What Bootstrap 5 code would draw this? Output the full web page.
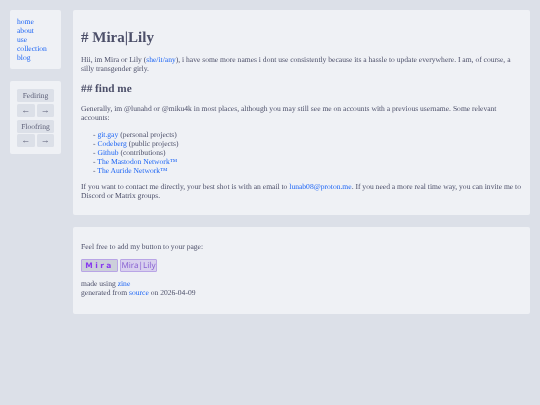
<!DOCTYPE html>
<html lang="en">
<head>
<meta charset="utf-8">
<title>Mira|Lily</title>
<link href="https://cdn.jsdelivr.net/npm/bootstrap@5.3.0/dist/css/bootstrap.min.css" rel="stylesheet">
<style>
html,body{height:100%}
body{background:#dce0e8;color:#4c4f69;font-family:"Liberation Serif",serif;font-size:7.58px;line-height:9px;text-rendering:geometricPrecision}
a{color:#1e66f5;text-decoration:none}
.shell{padding:10px;gap:12px;align-items:flex-start;min-height:100%;filter:blur(.25px)}
.side{width:51px;flex:none;gap:12px}
.pane{background:#eff1f5;border-radius:2px}
.navpane{padding:7px}
.ringpane{padding:8px 7px 7px;text-align:center}
.ringname,.ringbtn{background:#dce0e8;border-radius:1.5px;color:#5c5f77;height:13px;line-height:13px}
.ringrow{gap:2px;margin:1.5px 0 3px}
.ringrow:last-child{margin-bottom:0}
.ringbtn{flex:1 1 0;font-size:9px}
.mainc{min-width:0;gap:12px}
.pane-a{height:205px;padding:19px 7px 0 8px}
.pane-b{height:87px;padding:15px 8px 0}
h1.ttl{font-size:15px;line-height:18px;font-weight:700;margin:0 0 8px;color:#4c4f69}
h2.sub{font-size:11.25px;line-height:14px;font-weight:700;margin:0 0 8px;padding-top:1px;color:#4c4f69}
p.txt{margin:0 0 8px}
.lst{margin:0 0 7px;padding-left:12px}
.badges{gap:2px;margin-bottom:7px;height:13px}
.bdg{height:13px;width:37px;border:1px solid #b9a5e6;background:#ccd0da;color:#8839ef;font-family:"DejaVu Sans",sans-serif;font-size:7.5px;line-height:11px;text-align:center;border-radius:1px}
.bdg-a{font-weight:700;letter-spacing:2.4px}
.bdg-b{background:#d8d0ee;font-family:"Noto Sans",sans-serif;font-size:8.1px;color:#8a63d2;white-space:nowrap}
</style>
</head>
<body>
<div class="d-flex shell">
  <div class="d-flex flex-column side">
    <nav class="pane navpane">
      <a class="d-block" href="#">home</a>
      <a class="d-block" href="#">about</a>
      <a class="d-block" href="#">use</a>
      <a class="d-block" href="#">collection</a>
      <a class="d-block" href="#">blog</a>
    </nav>
    <div class="pane ringpane">
      <div class="ringname">Fediring</div>
      <div class="d-flex ringrow"><div class="ringbtn">←</div><div class="ringbtn">→</div></div>
      <div class="ringname">Floofring</div>
      <div class="d-flex ringrow"><div class="ringbtn">←</div><div class="ringbtn">→</div></div>
    </div>
  </div>
  <main class="d-flex flex-column flex-grow-1 mainc">
    <section class="pane pane-a">
      <h1 class="ttl"># Mira|Lily</h1>
      <p class="txt">Hii, im Mira or Lily (<a href="#">she/it/any</a>), i have some more names i dont use consistently because its a hassle to update everywhere. I am, of course, a silly transgender girly.</p>
      <h2 class="sub">## find me</h2>
      <p class="txt">Generally, im @lunahd or @miku4k in most places, although you may still see me on accounts with a previous username. Some relevant accounts:</p>
      <div class="lst">
        <div>- <a href="#">git.gay</a> (personal projects)</div>
        <div>- <a href="#">Codeberg</a> (public projects)</div>
        <div>- <a href="#">Github</a> (contributions)</div>
        <div>- <a href="#">The Mastodon Network™</a></div>
        <div>- <a href="#">The Auride Network™</a></div>
      </div>
      <p class="txt">If you want to contact me directly, your best shot is with an email to <a href="#">lunab08@proton.me</a>. If you need a more real time way, you can invite me to Discord or Matrix groups.</p>
    </section>
    <section class="pane pane-b">
      <p class="txt">Feel free to add my button to your page:</p>
      <div class="d-flex badges"><div class="bdg bdg-a">Mira</div><div class="bdg bdg-b">Mira|Lily</div></div>
      <div>made using <a href="#">zine</a></div>
      <div>generated from <a href="#">source</a> on 2026-04-09</div>
    </section>
  </main>
</div>
<script src="https://cdn.jsdelivr.net/npm/bootstrap@5.3.0/dist/js/bootstrap.bundle.min.js"></script>
</body>
</html>
